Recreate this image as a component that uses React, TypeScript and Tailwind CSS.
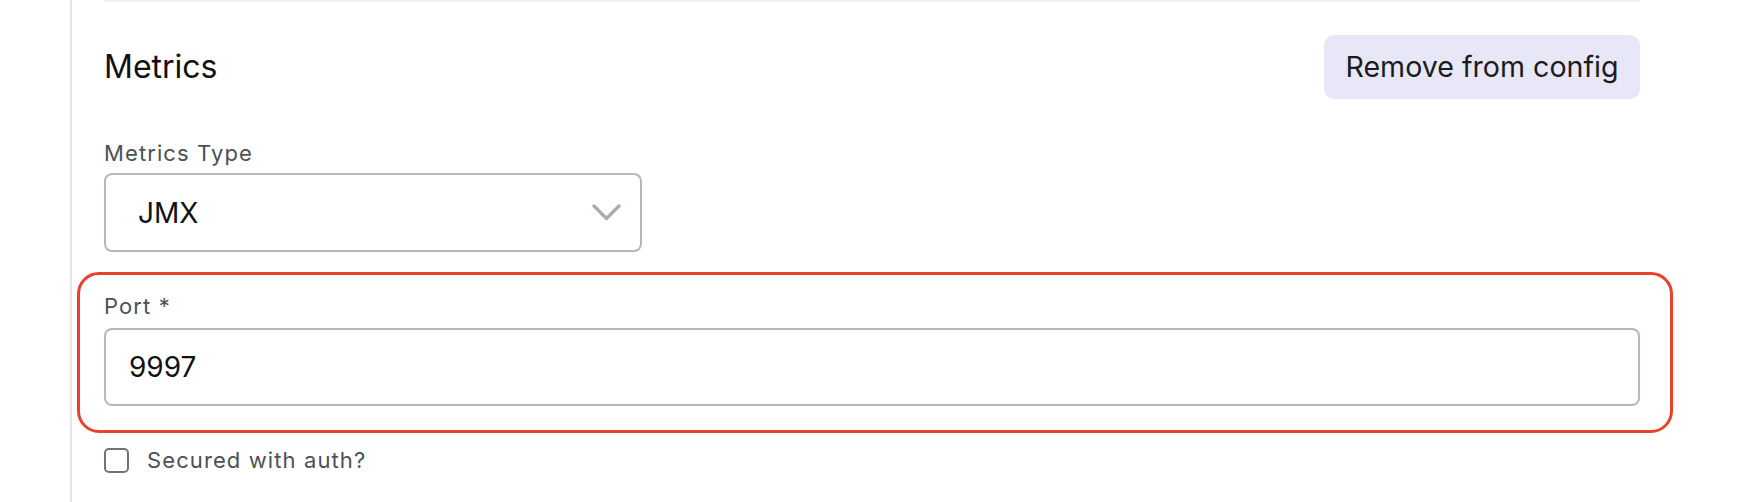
import React from "react";

export default function App() {
  return (
    <div
      className="w-[1760px] h-[502px] bg-white flex overflow-hidden"
      style={{ fontFamily: "Inter, 'Noto Sans', sans-serif" }}
    >
      <div className="w-[72px] shrink-0 border-r-2 border-[#e6e6e6]" />
      <div className="ml-[32px] w-[1536px] flex flex-col">
        <div className="h-[2px] bg-[#f2f2f2]" />
        <div className="mt-[33px] flex items-center justify-between">
          <h2 className="text-[32px] leading-[40px] text-[#111111] font-normal">Metrics</h2>
          <button className="h-[64px] w-[316px] rounded-[10px] bg-[#e8e7f8] text-[28.6px] text-[#1c1c1e] flex items-center justify-center">
            Remove from config
          </button>
        </div>
        <label className="mt-[40px] text-[22px] leading-[28px] tracking-[1.1px] text-[#4b5157]">Metrics Type</label>
        <div className="mt-[6px] w-[538px] h-[79px] rounded-[8px] border-2 border-[#b4b9bd] flex items-center justify-between pl-[32px] pr-[19px]">
          <span className="text-[28px] text-[#111111]">JMX</span>
          <svg width="29" height="17" viewBox="0 0 29 17" fill="none">
            <path d="M2 2 L14.5 14.5 L27 2" stroke="#a7adb1" strokeWidth="3.2" strokeLinecap="round" strokeLinejoin="round" />
          </svg>
        </div>
        <div className="mt-[20px] ml-[-27px] mr-[-33px] border-[3px] border-[#e8422a] rounded-[22px] pl-[24px] pr-[30px] pt-[17px] pb-[24px] flex flex-col">
          <label className="text-[22px] leading-[28px] tracking-[1.1px] text-[#4b5157]">Port *</label>
          <div className="mt-[8px] h-[78px] rounded-[8px] border-2 border-[#b4b9bd] flex items-center pl-[23px]">
            <span className="text-[28px] text-[#111111]">9997</span>
          </div>
        </div>
        <div className="mt-[13px] flex items-center">
          <div className="w-[25px] h-[25px] rounded-[5px] border-2 border-[#6f7477] bg-white" />
          <span className="ml-[18px] text-[22px] leading-[28px] tracking-[1.1px] text-[#4b5157]">Secured with auth?</span>
        </div>
      </div>
    </div>
  );
}
